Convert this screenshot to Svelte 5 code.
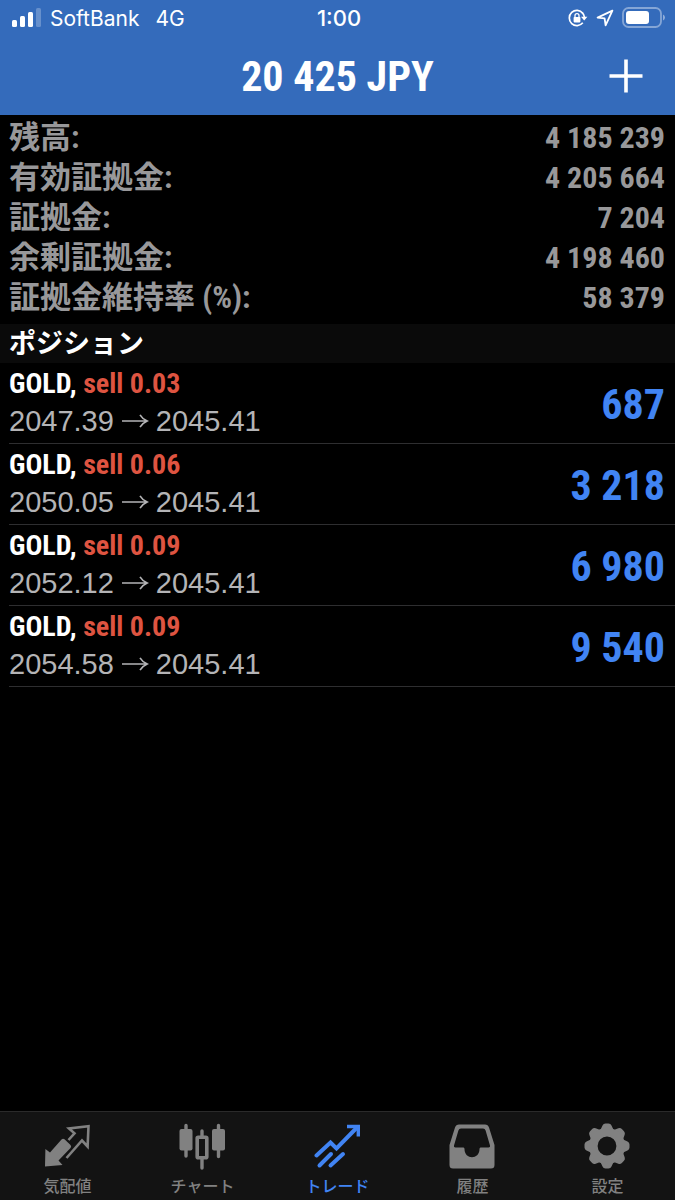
<script>
	let profit = '20 425 JPY';

	let account = [
		{ label: '残高:', value: '4 185 239' },
		{ label: '有効証拠金:', value: '4 205 664' },
		{ label: '証拠金:', value: '7 204' },
		{ label: '余剰証拠金:', value: '4 198 460' },
		{ label: '証拠金維持率 (%):', value: '58 379' }
	];

	let positions = [
		{ symbol: 'GOLD', side: 'sell', lots: '0.03', open: '2047.39', current: '2045.41', profit: '687' },
		{ symbol: 'GOLD', side: 'sell', lots: '0.06', open: '2050.05', current: '2045.41', profit: '3 218' },
		{ symbol: 'GOLD', side: 'sell', lots: '0.09', open: '2052.12', current: '2045.41', profit: '6 980' },
		{ symbol: 'GOLD', side: 'sell', lots: '0.09', open: '2054.58', current: '2045.41', profit: '9 540' }
	];

	let tabs = [
		{ id: 'quotes', label: '気配値' },
		{ id: 'chart', label: 'チャート' },
		{ id: 'trade', label: 'トレード' },
		{ id: 'history', label: '履歴' },
		{ id: 'settings', label: '設定' }
	];

	let active = 'trade';
</script>

<div class="app">
	<header>
		<div class="status">
			<div class="carrier">
				<svg width="30" height="20" viewBox="0 0 30 20" fill="#fff" aria-hidden="true">
					<rect x="0" y="12" width="5" height="7" rx="1.5" />
					<rect x="8" y="8" width="5" height="11" rx="1.5" />
					<rect x="16" y="4" width="5" height="15" rx="1.5" />
					<rect x="24" y="0" width="5" height="19" rx="1.5" opacity="0.25" />
				</svg>
				<span>SoftBank</span>
				<span class="network">4G</span>
			</div>
			<time>1:00</time>
			<div class="indicators">
				<svg width="20" height="18" viewBox="0 0 20 18" aria-hidden="true">
					<path d="M14.8 4.2A7.6 7.6 0 1 0 14.8 13.8" fill="none" stroke="#fff" stroke-width="1.7" />
					<path d="M14.2 3.6A7.6 7.6 0 0 1 16.4 8" fill="none" stroke="#fff" stroke-width="1.7" />
					<path d="M13 7.8H19.4L16.2 11.6Z" fill="#fff" />
					<rect x="5.6" y="8" width="6.8" height="5.4" rx="0.8" fill="#fff" />
					<path d="M7 8.4V6.6a2 2 0 0 1 4 0V8.4" fill="none" stroke="#fff" stroke-width="1.3" />
				</svg>
				<svg width="18" height="18" viewBox="0 0 18 18" aria-hidden="true">
					<path
						d="M16.4 1.6L1.6 8.6L8.6 9.4L9.6 16.4Z"
						fill="none"
						stroke="#fff"
						stroke-width="1.8"
						stroke-linejoin="round"
					/>
				</svg>
				<svg width="44" height="22" viewBox="0 0 44 22" aria-hidden="true">
					<rect x="1" y="1" width="38" height="19" rx="5.5" fill="none" stroke="#fff" stroke-width="1.8" opacity="0.4" />
					<rect x="4" y="4" width="23" height="13" rx="3" fill="#fff" />
					<path d="M41 7.5Q43 8.5 43 10.5T41 13.5Z" fill="#fff" opacity="0.45" />
				</svg>
			</div>
		</div>
		<div class="navbar">
			<h1>{profit}</h1>
			<button class="add" aria-label="新規注文">
				<svg width="34" height="34" viewBox="0 0 34 34" stroke="#fff" stroke-width="3.6" aria-hidden="true">
					<path d="M17 .5V33.5M.5 17H33.5" />
				</svg>
			</button>
		</div>
	</header>

	<main>
		<dl>
			{#each account as { label, value }}
				<div class="account-row">
					<dt>{label}</dt>
					<dd>{value}</dd>
				</div>
			{/each}
		</dl>

		<h2>ポジション</h2>
		<ul>
			{#each positions as p}
				<li>
					<div>
						<div class="order">{p.symbol}, <span class="side">{p.side} {p.lots}</span></div>
						<div class="prices">
							<span>{p.open}</span>
							<svg width="28" height="16" viewBox="0 0 28 16" fill="none" stroke="#b4b4b6" stroke-width="1.6" role="img" aria-label="→">
								<path d="M1 8H26M19 1.8Q21.5 6 26.2 8Q21.5 10 19 14.2" />
							</svg>
							<span>{p.current}</span>
						</div>
					</div>
					<div class="profit">{p.profit}</div>
				</li>
			{/each}
		</ul>
	</main>

	<nav>
		{#each tabs as { id, label }}
			<button class:active={active === id} on:click={() => (active = id)}>
				<svg width="48" height="48" viewBox="1 0 48 48" fill="none" stroke="currentColor" aria-hidden="true">
					{#if id === 'quotes'}
						<path d="M2 44.5L2.4 27L7 30.5L18.5 17.5Q20 16 21.5 17.3L27.5 23Q28.8 24.5 27.5 26L15.5 38.5L19.5 43Z" fill="currentColor" stroke="none" />
						<path d="M25.5 18L31.5 11.3L26 6.5L45.5 4.2L44.6 24.5L39 18.5L23.5 36" stroke-width="2.6" />
					{:else if id === 'chart'}
						<path d="M8 3.5V34M24 9V14M24 36.5V46M40.5 3.5V34.5" stroke-width="3.4" stroke-linecap="round" />
						<rect x="1.5" y="7" width="13" height="21.5" rx="2" fill="currentColor" stroke="none" />
						<rect x="34" y="7" width="13" height="21.5" rx="2" fill="currentColor" stroke="none" />
						<rect x="19.2" y="15.2" width="9.6" height="20.6" rx="1" stroke-width="3.6" />
					{:else if id === 'trade'}
						<path d="M3.5 33.5L17.5 20.5L23.5 26.5L44 5.5" stroke-width="4" stroke-linecap="round" />
						<path d="M34 4.5H45.3V14.5" stroke-width="3.4" />
						<path d="M6.5 43.5L18 32M17.5 43.5L30 32" stroke-width="4" stroke-linecap="round" />
					{:else if id === 'history'}
						<path
							fill-rule="evenodd"
							fill="currentColor"
							stroke="none"
							d="M11 2.5H37Q40 2.5 41 5.5L46.5 23V43Q46.5 46.5 43 46.5H5Q1.5 46.5 1.5 43V23L7 5.5Q8 2.5 11 2.5ZM13 6.5Q11 6.5 10.4 8.5L6 23.5Q5.4 25.5 7.5 25.5H15.5Q16.5 25.5 16.5 27C16.5 38 31.5 38 31.5 27Q31.5 25.5 32.5 25.5H40.5Q42.6 25.5 42 23.5L37.6 8.5Q37 6.5 35 6.5Z"
						/>
					{:else}
						<g fill="currentColor" stroke="none">
							{#each [0, 45, 90, 135, 180, 225, 270, 315] as angle}
								<path d="M16 11L19.5 3.5Q20.4 1.5 22.5 1.5H25.5Q27.6 1.5 28.5 3.5L32 11Z" transform="rotate({angle} 24 24)" />
							{/each}
						</g>
						<circle cx="24" cy="24" r="13.7" stroke-width="8.6" />
					{/if}
				</svg>
				<span>{label}</span>
			</button>
		{/each}
	</nav>
</div>

<style>
	:global(body) {
		background-color: #000;
		color: #fff;
		font-family: 'Liberation Sans', 'Noto Sans CJK JP', sans-serif;
	}

	.app {
		display: flex;
		flex-direction: column;
		min-height: 100vh;
	}

	h1,
	h2,
	dl,
	dd,
	ul {
		margin: 0;
		padding: 0;
	}

	button {
		padding: 0;
		border: none;
		background: none;
		color: inherit;
		font-family: inherit;
		cursor: pointer;
	}

	svg {
		display: block;
		flex-shrink: 0;
	}

	header {
		background-color: #346bbb;
	}

	.status,
	.navbar {
		display: grid;
		grid-template-columns: 1fr auto 1fr;
		align-items: center;
	}

	.status {
		height: 36px;
		padding: 0 9px 0 12px;
		font-family: Inter, sans-serif;
		font-size: 21px;
	}

	.status time {
		font-size: 22px;
		font-weight: 500;
	}

	.carrier,
	.indicators {
		display: flex;
		align-items: center;
		gap: 8px;
	}

	.network {
		margin-left: 8px;
	}

	.indicators {
		justify-content: flex-end;
	}

	.navbar {
		height: 79px;
		padding: 0 32px;
	}

	h1,
	dl,
	.order,
	.profit {
		font-family: 'Liberation Sans Narrow', 'Roboto Condensed', 'Noto Sans CJK JP', sans-serif;
		font-weight: bold;
	}

	h1 {
		grid-column: 2;
		padding-top: 2px;
		font-size: 42px;
	}

	.add {
		justify-self: end;
	}

	dl {
		padding: 3px 10px 6px 9px;
		color: #98989a;
	}

	.account-row {
		display: flex;
		align-items: center;
		justify-content: space-between;
		height: 40px;
		line-height: 40px;
	}

	dt {
		font-size: 31px;
	}

	dd {
		font-size: 30px;
	}

	h2 {
		padding: 2px 9px 0;
		background-color: #0a0a0a;
		font-size: 27px;
		font-weight: bold;
		line-height: 37px;
	}

	ul {
		list-style-type: none;
	}

	li {
		display: flex;
		align-items: center;
		justify-content: space-between;
		box-sizing: border-box;
		height: 81px;
		margin-left: 9px;
		padding-right: 10px;
		border-bottom: 1px solid #2e2e30;
	}

	.order {
		font-size: 28px;
		line-height: 36px;
	}

	.side {
		color: #de5441;
	}

	.prices {
		display: flex;
		align-items: center;
		gap: 7px;
		color: #b4b4b6;
		font-size: 29px;
		line-height: 38px;
	}

	.profit {
		padding-top: 2px;
		color: #4184f3;
		font-size: 42px;
	}

	nav {
		display: flex;
		height: 88px;
		margin-top: auto;
		border-top: 1px solid #2a2a2a;
		background-color: #131313;
	}

	nav button {
		display: flex;
		flex: 1;
		flex-direction: column;
		align-items: center;
		gap: 5px;
		padding-top: 10px;
		color: #818181;
		font-size: 16px;
		font-weight: 500;
		line-height: 24px;
	}

	nav button.active {
		color: #4184f3;
	}
</style>
